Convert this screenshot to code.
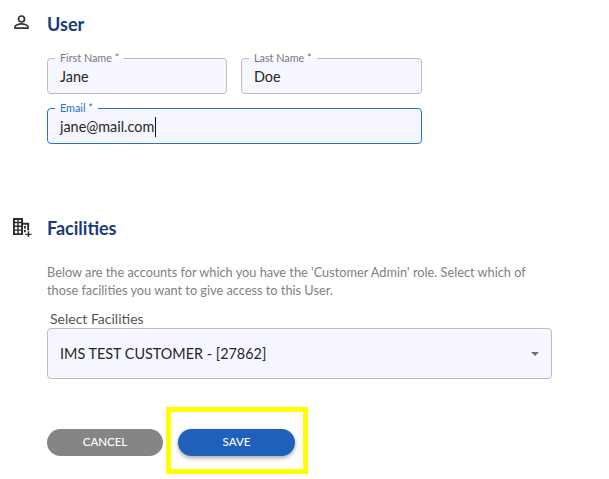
<div class="page">
  <section class="section user">
    <div class="icon-col">
      <svg width="17" height="16" viewBox="0 0 17 16" fill="none" stroke="#333" stroke-width="1.700">
        <circle cx="8.500" cy="5" r="3" />
        <path d="M2 14.200v-1.300c0-1.800 4-3 6.500-3s6.500 1.200 6.500 3v1.300z" />
      </svg>
    </div>
    <div class="body">
      <h2>User</h2>
      <div class="field-row">
        <fieldset class="field">
          <legend>First Name *</legend>
          <span class="value">Jane</span>
        </fieldset>
        <fieldset class="field">
          <legend>Last Name *</legend>
          <span class="value">Doe</span>
        </fieldset>
      </div>
      <fieldset class="field focused">
        <legend>Email *</legend>
        <span class="value">jane@mail.com<span class="caret"></span></span>
      </fieldset>
    </div>
  </section>

  <section class="section facilities">
    <div class="icon-col">
      <svg width="19" height="19" viewBox="0 0 20 20" fill="#2e2e2e">
        <path fill-rule="evenodd" d="M0 0h10.500v5H17v8h-2V7h-4.500v11H0zM2 2v2h2.500V2zM6 2v2h2.500V2zM2 5.500V8h2.500V5.500zM6 5.500V8h2.500V5.500zM2 9.500V12h2.500V9.500zM6 9.500V12h2.500V9.500zM2 13.500V16h2.500v-2.500zM6 13.500V16h2.500v-2.500z" />
        <path d="M11.500 8.500h2V11h-2zM11.500 12.500h2V15h-2zM15.500 14H17v2.500h2.500V18H17v2h-1.500v-2H13v-1.500h2.500z" />
      </svg>
    </div>
    <div class="body">
      <h2>Facilities</h2>
      <p class="hint">
        Below are the accounts for which you have the 'Customer Admin' role. Select which of
        those facilities you want to give access to this User.
      </p>
      <div class="select-label">Select Facilities</div>
      <div class="select">
        <span>IMS TEST CUSTOMER - [27862]</span>
        <span class="arrow"></span>
      </div>
      <div class="actions">
        <button class="btn cancel">CANCEL</button>
        <button class="btn save">SAVE</button>
        <div class="highlight"></div>
      </div>
    </div>
  </section>
</div>

<style>
  :global(body) { margin: 0; background: #fff; font-family: Lato, "Liberation Sans", sans-serif; }
  .page { width: 609px; height: 479px; overflow: hidden; box-sizing: border-box; padding-top: 12px; }

  .section { display: flex; }
  .icon-col { width: 47px; flex: none; padding-left: 13px; box-sizing: border-box; }
  .user svg { display: block; margin-top: 2px; }
  .facilities { margin-top: 72px; }
  .facilities svg { display: block; margin-top: 2px; }
  .body { width: 505px; }

  h2 { margin: 0; font-size: 18px; line-height: 24px; font-weight: 700; color: #1a3a78; }
  .user h2 { margin-bottom: 22px; }

  .field-row { display: flex; gap: 14px; margin-bottom: 14px; }
  .field {
    width: 375px; height: 42px; margin: -6px 0 0; padding: 0 12px; box-sizing: border-box; min-width: 0;
    background: #f6f7fe;
    border: 1px solid #bcbdc4; border-radius: 4px;
  }
  .field-row .field { width: 180px; }
  .field-row .field:last-child { width: 181px; }
  .field legend { margin-left: -5px; padding: 0 5px; font-size: 10.800px; line-height: 12px; color: #77777c; }
  .field .value { display: block; margin-top: 3px; font-size: 14.400px; line-height: 20px; color: #26262a; }
  .focused { border-color: #2a72c8; }
  .focused legend { color: #2a72c8; }
  .caret { display: inline-block; width: 1px; height: 20px; margin-left: 1px; background: #111; vertical-align: top; }

  .hint { margin: 23px 0 0; width: 495px; font-size: 12.750px; line-height: 18px; color: #808085; }
  .select-label { margin: 11px 0 0 3px; font-size: 14px; line-height: 18px; color: #55555a; }
  .select {
    display: flex; align-items: center; justify-content: space-between;
    height: 51px; padding: 0 12px; box-sizing: border-box;
    background: #f6f7fe; border: 1px solid #bcbdc4; border-radius: 4px;
    font-size: 14.400px; color: #26262a;
  }
  .arrow { width: 0; height: 0; border: 4.500px solid transparent; border-top-color: #707075; border-bottom: 0; }

  .actions { position: relative; display: flex; gap: 15px; margin-top: 50px; }
  .btn { height: 27px; padding: 0 0 2px; border: 0; border-radius: 14px; color: #fff; font-family: inherit; font-size: 11.500px; font-weight: 500; }
  .cancel { width: 116px; background: #858585; }
  .save { width: 117px; background: #1f60bb; box-shadow: 0 2px 4px rgba(0, 0, 0, 0.35); }
  .highlight { position: absolute; left: 119px; top: -22px; width: 142px; height: 67px; box-sizing: border-box; border: 5px solid #ffff00; }
</style>
